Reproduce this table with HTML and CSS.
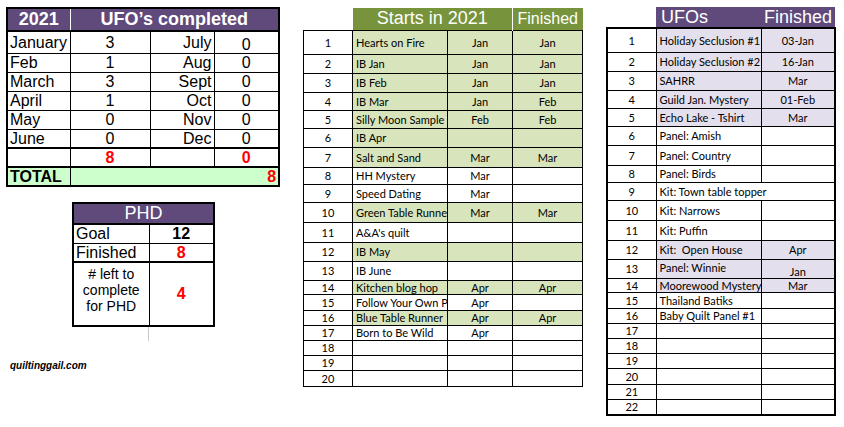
FILE: index.html
```html
<!DOCTYPE html>
<html>
<head>
<meta charset="utf-8">
<link rel="stylesheet" href="styles.css">
</head>
<body>
<div class="page">
  <div class="left">
    <table class="ufo">
      <colgroup><col class="c1"><col class="c2"><col class="c3"><col class="c4"></colgroup>
      <tr class="hd"><th class="yr">2021</th><th colspan="3">UFO’s completed</th></tr>
      <tr class="jan"><td>January</td><td class="n">3</td><td class="m">July</td><td class="n lo">0</td></tr>
      <tr><td>Feb</td><td class="n">1</td><td class="m">Aug</td><td class="n">0</td></tr>
      <tr><td>March</td><td class="n">3</td><td class="m">Sept</td><td class="n">0</td></tr>
      <tr><td>April</td><td class="n">1</td><td class="m">Oct</td><td class="n">0</td></tr>
      <tr><td>May</td><td class="n">0</td><td class="m">Nov</td><td class="n">0</td></tr>
      <tr class="last"><td>June</td><td class="n">0</td><td class="m">Dec</td><td class="n">0</td></tr>
      <tr class="sum"><td></td><td class="n red">8</td><td></td><td class="n red">0</td></tr>
      <tr class="tot"><td class="tl">TOTAL</td><td colspan="3" class="tv red">8</td></tr>
    </table>

    <table class="phd">
      <colgroup><col class="p1"><col class="p2"></colgroup>
      <tr class="hd"><th colspan="2">PHD</th></tr>
      <tr class="goal"><td>Goal</td><td class="n b">12</td></tr>
      <tr class="fin"><td>Finished</td><td class="n red">8</td></tr>
      <tr class="left-row"><td class="lt">#&nbsp;left to<br>complete<br>for PHD</td><td class="n red">4</td></tr>
    </table>
    <div class="grid-tail"></div>
    <div class="site">quiltinggail.com</div>
  </div>

  <div class="mid">
    <table class="starts">
      <colgroup><col class="k1"><col class="k2"><col class="k3"><col class="k4"></colgroup>
      <tr class="hd"><th class="blank"></th><th colspan="2" class="s21">Starts in 2021</th><th class="fh">Finished</th></tr>
      <tr class="g h24"><td class="num">1</td><td class="nm">Hearts on Fire</td><td>Jan</td><td>Jan</td></tr>
      <tr class="g h19"><td class="num">2</td><td class="nm">IB Jan</td><td>Jan</td><td>Jan</td></tr>
      <tr class="g h19"><td class="num">3</td><td class="nm">IB Feb</td><td>Jan</td><td>Jan</td></tr>
      <tr class="g h18"><td class="num">4</td><td class="nm">IB Mar</td><td>Jan</td><td>Feb</td></tr>
      <tr class="g h18"><td class="num">5</td><td class="nm">Silly Moon Sample</td><td>Feb</td><td>Feb</td></tr>
      <tr class="g h19"><td class="num">6</td><td class="nm">IB Apr</td><td></td><td></td></tr>
      <tr class="g h20"><td class="num">7</td><td class="nm">Salt and Sand</td><td>Mar</td><td>Mar</td></tr>
      <tr class="h17"><td class="num">8</td><td class="nm">HH Mystery</td><td>Mar</td><td></td></tr>
      <tr class="h18"><td class="num">9</td><td class="nm">Speed Dating</td><td>Mar</td><td></td></tr>
      <tr class="g h20"><td class="num">10</td><td class="nm">Green Table Runne</td><td>Mar</td><td>Mar</td></tr>
      <tr class="h20"><td class="num">11</td><td class="nm">A&amp;A's quilt</td><td></td><td></td></tr>
      <tr class="g h19"><td class="num">12</td><td class="nm">IB May</td><td></td><td></td></tr>
      <tr class="h19"><td class="num">13</td><td class="nm">IB June</td><td></td><td></td></tr>
      <tr class="g h14"><td class="num">14</td><td class="nm">Kitchen blog hop</td><td>Apr</td><td>Apr</td></tr>
      <tr class="h16"><td class="num">15</td><td class="nm">Follow Your Own P</td><td>Apr</td><td></td></tr>
      <tr class="g h15"><td class="num">16</td><td class="nm">Blue Table Runner</td><td>Apr</td><td>Apr</td></tr>
      <tr class="h15"><td class="num">17</td><td class="nm">Born to Be Wild</td><td>Apr</td><td></td></tr>
      <tr class="h15"><td class="num">18</td><td class="nm"></td><td></td><td></td></tr>
      <tr class="h15"><td class="num">19</td><td class="nm"></td><td></td><td></td></tr>
      <tr class="h16"><td class="num">20</td><td class="nm"></td><td></td><td></td></tr>
    </table>
  </div>

  <div class="right">
    <table class="ufos">
      <colgroup><col class="u1"><col class="u2"><col class="u3"></colgroup>
      <thead>
        <tr class="hd"><th class="blank"></th><th class="ut">UFOs</th><th class="uf">Finished</th></tr>
      </thead>
      <tbody>
      <tr class="p h24"><td class="num">1</td><td class="nm">Holiday Seclusion #1</td><td>03-Jan</td></tr>
      <tr class="p h19"><td class="num">2</td><td class="nm">Holiday Seclusion #2</td><td>16-Jan</td></tr>
      <tr class="p h19"><td class="num">3</td><td class="nm">SAHRR</td><td>Mar</td></tr>
      <tr class="p h18"><td class="num">4</td><td class="nm">Guild Jan. Mystery</td><td>01-Feb</td></tr>
      <tr class="p h18"><td class="num">5</td><td class="nm">Echo Lake - Tshirt</td><td>Mar</td></tr>
      <tr class="h19"><td class="num">6</td><td class="nm">Panel: Amish</td><td></td></tr>
      <tr class="h20"><td class="num">7</td><td class="nm">Panel: Country</td><td></td></tr>
      <tr class="h17"><td class="num">8</td><td class="nm">Panel: Birds</td><td></td></tr>
      <tr class="h18"><td class="num">9</td><td class="nm span" colspan="2">Kit: Town table topper</td></tr>
      <tr class="h20"><td class="num">10</td><td class="nm">Kit: Narrows</td><td></td></tr>
      <tr class="h20"><td class="num">11</td><td class="nm">Kit: Puffin</td><td></td></tr>
      <tr class="p h19"><td class="num">12</td><td class="nm">Kit:&nbsp; Open House</td><td>Apr</td></tr>
      <tr class="p h19"><td class="num">13</td><td class="nm top">Panel: Winnie</td><td class="bot">Jan</td></tr>
      <tr class="p h14"><td class="num">14</td><td class="nm">Moorewood Mystery</td><td>Mar</td></tr>
      <tr class="h16"><td class="num">15</td><td class="nm">Thailand Batiks</td><td></td></tr>
      <tr class="h15"><td class="num">16</td><td class="nm">Baby Quilt Panel #1</td><td></td></tr>
      <tr class="h15"><td class="num">17</td><td class="nm"></td><td></td></tr>
      <tr class="h15"><td class="num">18</td><td class="nm"></td><td></td></tr>
      <tr class="h15"><td class="num">19</td><td class="nm"></td><td></td></tr>
      <tr class="h16"><td class="num">20</td><td class="nm"></td><td></td></tr>
      <tr class="h15"><td class="num">21</td><td class="nm"></td><td></td></tr>
      <tr class="h16"><td class="num">22</td><td class="nm"></td><td></td></tr>
      </tbody>
    </table>
  </div>
</div>
</body>
</html>
```

FILE: styles.css
```css
* { box-sizing: border-box; }
html, body { margin: 0; padding: 0; background: #fff; }
body { font-family: "Liberation Sans", Arial, sans-serif; color: #000; }

.page { display: flex; align-items: flex-start; }

table { border-collapse: collapse; table-layout: fixed; border-spacing: 0; }
td, th { padding: 0; }

.red { color: #ff0000; font-weight: bold; }
.b { font-weight: bold; }

/* ---------- left column ---------- */
.left { margin-left: 6px; margin-top: 7px; width: 273px; display: flex; flex-direction: column; }

.ufo { width: 272px; font-size: 16px; border: 2px solid #000; }
.ufo .c1 { width: 63px; }
.ufo .c2 { width: 80px; }
.ufo .c3 { width: 64px; }
.ufo .c4 { width: 65px; }
.ufo th { background: #604a7b; color: #fff; font-size: 18px; font-weight: bold; height: 23px; border-bottom: 2px solid #000; }
.ufo th.yr { border-right: 1px solid #fff; }
.ufo td { border: 1px solid #000; height: 19px; line-height: 17px; padding: 0 2px; white-space: nowrap; }
.ufo tr.jan td { height: 22px; }
.ufo td.n { text-align: center; }
.ufo td.m { text-align: right; }
.ufo td.lo { vertical-align: bottom; }
.ufo tr.last td { border-bottom: 2px solid #000; }
.ufo tr.sum td { border-bottom: 2px solid #000; }
.ufo tr.tot td { background: #ccffcc; height: 18px; font-weight: bold; }
.ufo td.tl { border-right: 1px solid #000; }
.ufo td.tv { text-align: right; padding-right: 2px; }

.phd { width: 141px; margin-left: 66px; margin-top: 15px; border: 2px solid #000; font-size: 16px; }
.phd .p1 { width: 76px; }
.phd .p2 { width: 65px; }
.phd th { background: #604a7b; color: #fff; font-weight: normal; font-size: 18px; height: 20px; line-height: 19px; border-bottom: 2px solid #000; }
.phd td { border: 1px solid #000; padding: 0 2px; line-height: 17px; }
.phd tr.goal td { height: 19px; }
.phd tr.fin td { height: 17px; border-bottom: 2px solid #000; }
.phd td.n { text-align: center; }
.phd td.lt { font-size: 14px; line-height: 16px; text-align: center; vertical-align: top; padding-top: 3px; height: 64px; }

.grid-tail { width: 1px; height: 14px; background: #c8c8c8; margin-left: 142px; }
.site { font-size: 10px; font-weight: bold; font-style: italic; margin-left: 4px; margin-top: 19px; }

/* ---------- shared sheet styles ---------- */
.starts, .ufos { font-family: Lato, "Open Sans", sans-serif; font-size: 11px; }
.starts td, .ufos td { border: 1px solid #000; text-align: center; white-space: nowrap; overflow: hidden; line-height: 13px; }
.starts td.nm, .ufos td.nm { text-align: left; padding-left: 3px; text-overflow: clip; }
tr.h24 td { height: 24px; }
tr.h20 td { height: 20px; }
tr.h19 td { height: 19px; }
tr.h18 td { height: 18px; }
tr.h17 td { height: 17px; }
tr.h16 td { height: 16px; }
tr.h15 td { height: 15px; }
tr.h14 td { height: 14px; }

/* ---------- middle ---------- */
.mid { margin-left: 24px; margin-top: 8px; }
.starts { width: 279px; }
.starts .k1 { width: 49px; }
.starts .k2 { width: 95px; }
.starts .k3 { width: 65px; }
.starts .k4 { width: 70px; }
.starts th { background: #77933c; color: #fff; font-family: "Liberation Sans", Arial, sans-serif; font-weight: normal; height: 22px; }
.starts th.blank { background: transparent; }
.starts th.s21 { font-size: 18px; border-right: 1px solid #fff; }
.starts th.fh { font-size: 16px; }
.starts tr.g td:not(.num) { background: #d8e4bc; }

/* ---------- right ---------- */
.right { margin-left: 23px; margin-top: 7px; }
.ufos { width: 228px; }
.ufos .u1 { width: 49px; }
.ufos .u2 { width: 105px; }
.ufos .u3 { width: 74px; }
.ufos tbody { border: 2px solid #000; }
.ufos th { background: #604a7b; color: #fff; font-family: "Liberation Sans", Arial, sans-serif; font-weight: normal; font-size: 18px; height: 21px; line-height: 20px; }
.ufos th.blank { background: transparent; }
.ufos th.ut { text-align: left; padding-left: 5px; }
.ufos th.uf { text-align: center; }
.ufos tr.p td:not(.num) { background: #e4dfec; }
.ufos td.top { vertical-align: top; padding-top: 1px; }
.ufos td.bot { vertical-align: bottom; }
```
